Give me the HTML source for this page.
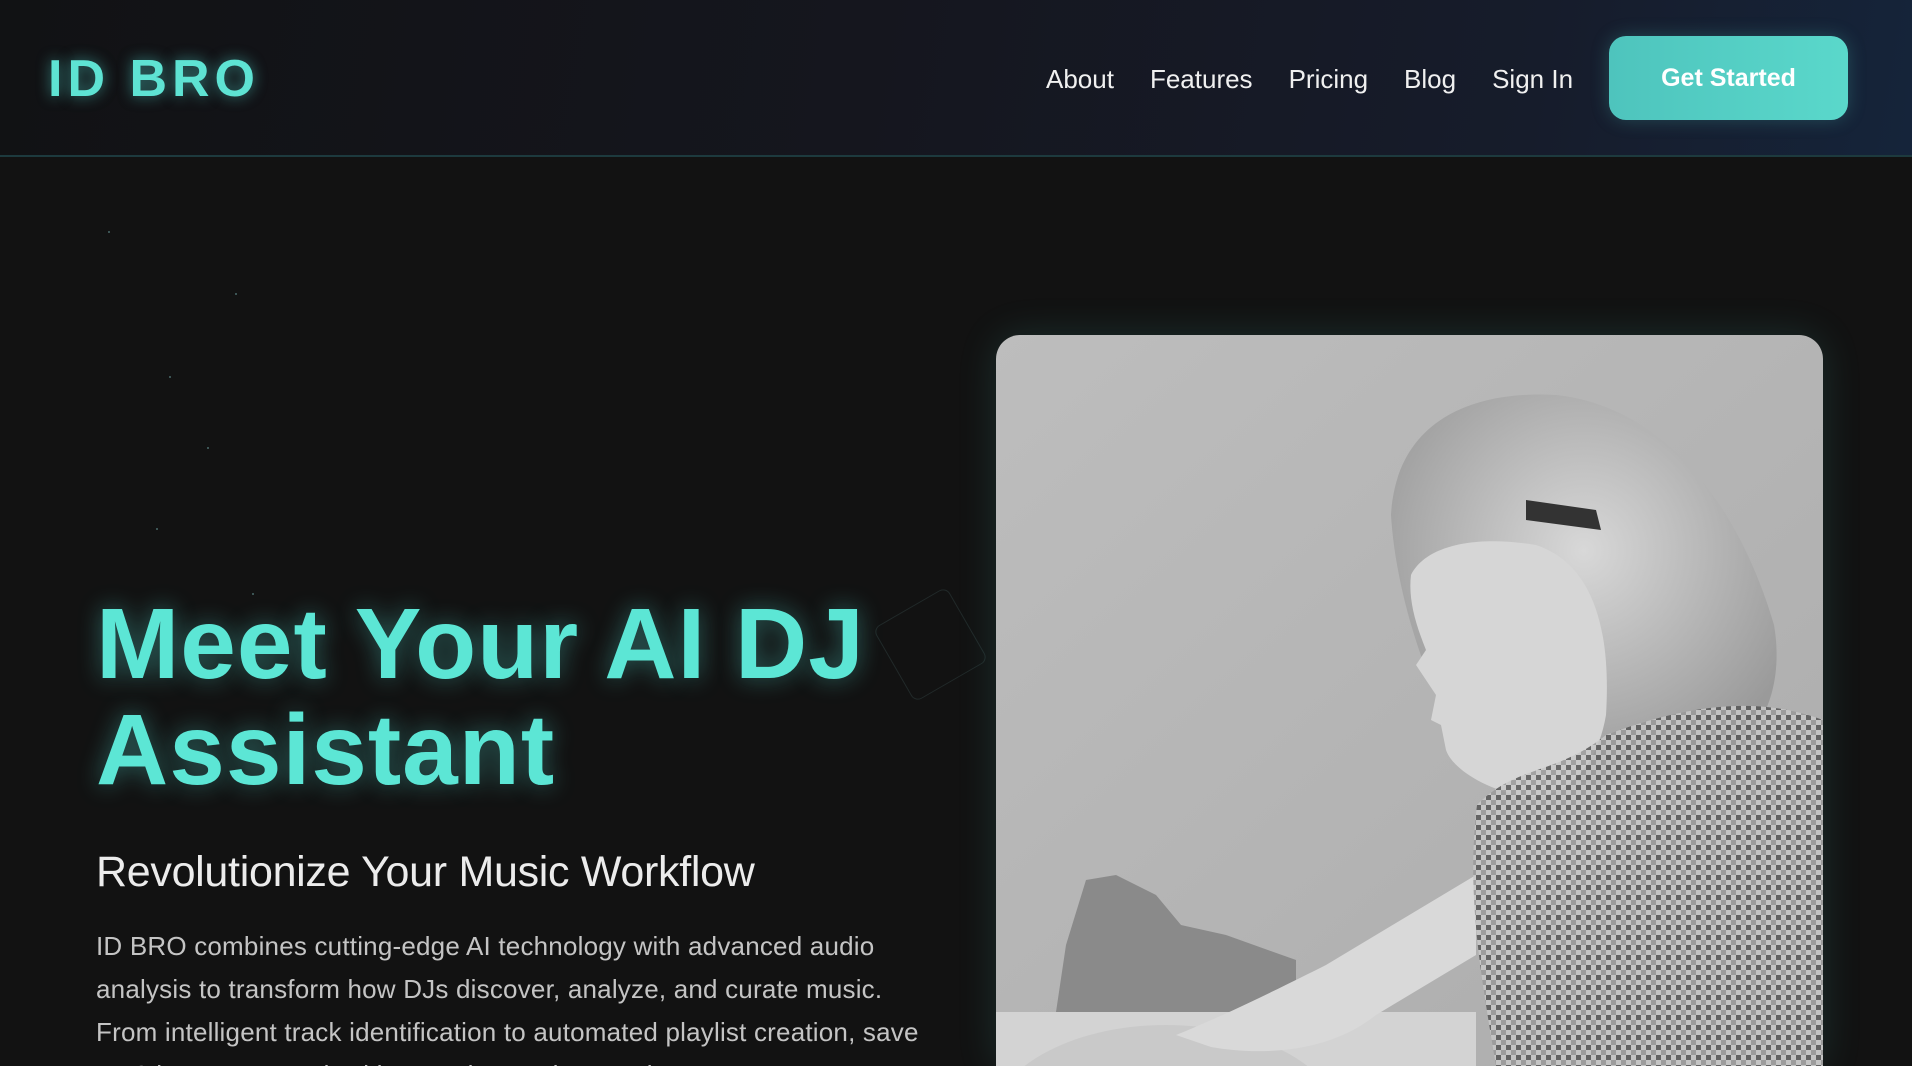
<!DOCTYPE html>
<html><head><meta charset="utf-8"><style>
*{margin:0;padding:0;box-sizing:border-box}
html,body{width:1912px;height:1066px;overflow:hidden;background:#121212;font-family:"Liberation Sans",sans-serif}
body{position:relative}
header{position:absolute;left:0;top:0;width:1912px;height:157px;background:linear-gradient(100deg,#111214 0%,#15161e 45%,#161c2b 80%,#15243a 100%);border-bottom:2px solid #1d3a3e}
.logo{position:absolute;left:48px;top:49px;font-size:52px;font-weight:700;letter-spacing:5px;color:#5ee3d3;text-shadow:0 0 14px rgba(78,205,196,.6)}
nav{position:absolute;top:64px;left:1046px;font-size:26px;color:#f0f0f0;white-space:nowrap}
nav span{margin-right:36px}
.btn{position:absolute;left:1609px;top:36px;width:239px;height:84px;border-radius:17px;background:linear-gradient(90deg,#4ec4bd,#5ad8cb);color:#fff;font-weight:700;font-size:25px;text-align:center;line-height:84px;box-shadow:0 0 18px rgba(78,205,196,.25)}
.dot{position:absolute;width:2px;height:2px;background:#4a6a6a;border-radius:50%}
h1{position:absolute;left:96px;top:591px;font-size:100px;line-height:106px;font-weight:700;color:#5ce6d5;letter-spacing:1px;text-shadow:0 0 24px rgba(78,205,196,.45);white-space:nowrap}
h2{position:absolute;left:96px;top:848px;font-size:43px;font-weight:400;color:#ececec;white-space:nowrap;letter-spacing:-.3px}
p{position:absolute;left:96px;top:925px;font-size:26px;line-height:43px;color:#c4c4c4;white-space:nowrap;letter-spacing:.2px}
.sq{position:absolute;left:888px;top:602px;width:85px;height:85px;border:1px solid rgba(80,110,110,.25);border-radius:8px;transform:rotate(-30deg)}
.photo{position:absolute;left:996px;top:335px;width:827px;height:731px;border-radius:24px 24px 0 0;overflow:hidden;box-shadow:0 0 40px rgba(78,205,196,.15)}
</style></head><body>
<header>
<div class="logo">ID BRO</div>
<nav><span>About</span><span>Features</span><span>Pricing</span><span>Blog</span><span>Sign In</span></nav>
<div class="btn">Get Started</div>
</header>
<div class="dot" style="left:108px;top:231px"></div>
<div class="dot" style="left:235px;top:293px"></div>
<div class="dot" style="left:169px;top:376px"></div>
<div class="dot" style="left:207px;top:447px"></div>
<div class="dot" style="left:156px;top:528px"></div>
<div class="dot" style="left:252px;top:593px"></div>
<div class="sq"></div>
<h1>Meet Your AI DJ<br>Assistant</h1>
<h2>Revolutionize Your Music Workflow</h2>
<p>ID BRO combines cutting-edge AI technology with advanced audio<br>analysis to transform how DJs discover, analyze, and curate music.<br>From intelligent track identification to automated playlist creation, save<br>5-10 hours per week with our advanced DJ assistant.</p>
<div class="photo">
<svg width="827" height="731" viewBox="0 0 827 731">
<defs>
<linearGradient id="bg" x1="0" y1="0" x2="1" y2="1"><stop offset="0" stop-color="#bdbdbd"/><stop offset="1" stop-color="#acacac"/></linearGradient>
<pattern id="chk" width="10" height="10" patternUnits="userSpaceOnUse"><rect width="10" height="10" fill="#c8c8c8"/><rect width="5" height="5" fill="#555"/><rect x="5" y="5" width="5" height="5" fill="#999"/></pattern>
<radialGradient id="hair" cx=".5" cy=".4" r=".6"><stop offset="0" stop-color="#d8d8d8"/><stop offset="1" stop-color="#9a9a9a"/></radialGradient>
</defs>
<rect width="827" height="731" fill="url(#bg)"/>
<path d="M70 610 L90 545 L120 540 L160 560 L185 590 L230 600 L300 625 L300 677 L60 677Z" fill="#8a8a8a"/>
<rect x="0" y="677" width="480" height="90" fill="#d3d3d3"/>
<ellipse cx="170" cy="790" rx="175" ry="100" fill="#c9c9c9"/>
<ellipse cx="165" cy="778" rx="55" ry="25" fill="#a6a6a6" stroke="#777" stroke-width="3"/>
<rect x="330" y="760" width="150" height="20" fill="#6c6c6c"/>
<path d="M180 700 C230 680 290 650 330 630 L480 540 L480 620 L380 680 C330 720 260 720 215 712Z" fill="#d9d9d9"/>
<path d="M395 180 C400 90 470 55 560 60 C660 70 740 160 778 290 C790 360 760 420 700 430 L600 450 L470 420 C430 350 400 260 395 180Z" fill="url(#hair)"/>
<path d="M415 240 C430 210 480 200 540 210 C600 230 615 300 610 380 C600 440 560 470 520 460 C480 450 455 430 450 415 L445 390 L435 385 L440 360 L420 330 L430 315 C420 290 412 265 415 240Z" fill="#d6d6d6"/>
<path d="M530 165 L600 175 L605 195 L530 185Z" fill="#333"/>
<path d="M481 470 C520 430 560 440 610 400 C690 370 760 360 827 385 L827 731 L500 731 C485 640 470 560 481 470Z" fill="url(#chk)" opacity=".85"/>
</svg>
</div>
</body></html>
